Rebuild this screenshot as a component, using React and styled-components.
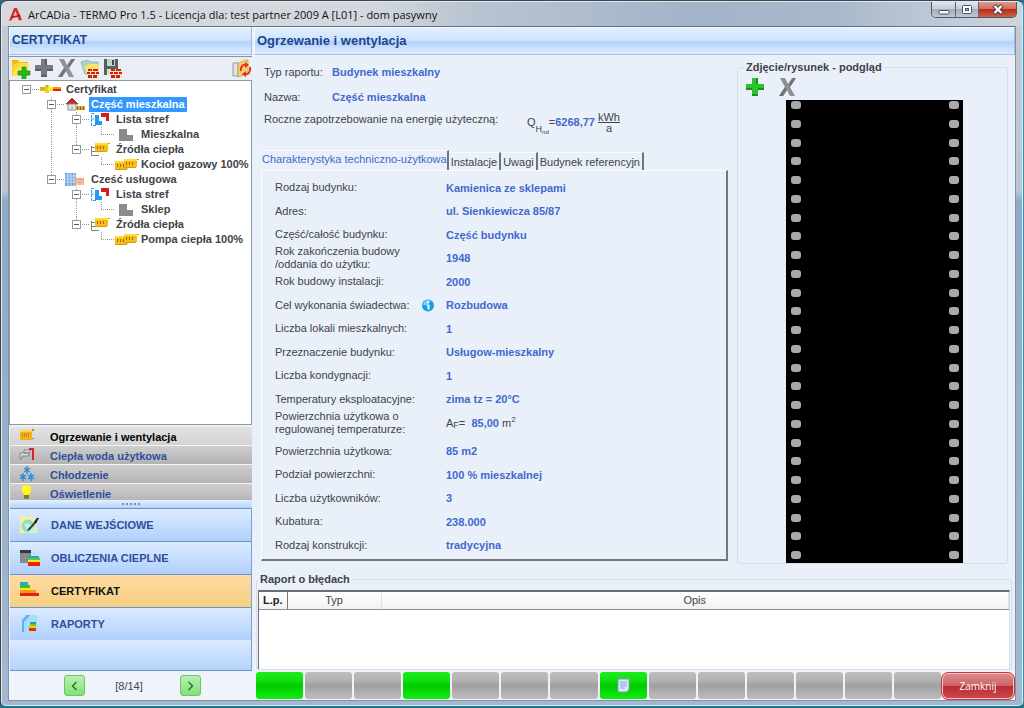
import React, { useState } from "react";
import styled, { createGlobalStyle } from "styled-components";

const GlobalStyle = createGlobalStyle`
    * { box-sizing: border-box; }
    body {
        margin: 0;
        background: #2d6f86;
        font-family: "Liberation Sans", Arial, sans-serif;
        font-size: 11px;
        color: #404347;
    }
    button { font-family: inherit; font-size: inherit; color: inherit; padding: 0; border: 0; background: none; }
`;

const Window = styled.div`
    height: 100vh;
    min-height: 640px;
    display: flex;
    flex-direction: column;
    padding: 0 7px 5px;
    border: 1px solid #3c4450;
    border-right-color: #1b9bb5;
    border-bottom: 2px solid #13788f;
    border-radius: 7px 7px 6px 6px;
    background: linear-gradient(180deg, #c3cbd4 0, #bcc6d2 190px, #8ea9c8 200px, #a3b8d0 100%);
    box-shadow: inset 0 0 0 1px #e3e9ef;
`;

const TitleBar = styled.header`
    height: 24px;
    flex: none;
    display: flex;
    align-items: center;
    margin: 1px -6px 0;
    padding-left: 6px;
    border-radius: 6px 6px 0 0;
    background: linear-gradient(90deg, #d5d9de 0%, #d3d8de 36%, #b9c4d1 46%, #a2b4ca 68%, #a9b9cb 82%, #cdd6df 100%);
`;

const Title = styled.h1`
    flex: 1;
    margin: 0 0 0 5px;
    font: 11px "Open Sans", "Noto Sans", sans-serif;
    color: #111;
`;

const WindowButtons = styled.div`
    display: flex;
    align-self: flex-start;
    height: 16px;
    margin-right: 5px;
    border: 1px solid #4f5b69;
    border-top: 0;
    border-radius: 0 0 5px 5px;
    overflow: hidden;
`;

const WindowButton = styled.button`
    width: ${(p) => (p.$close ? 38 : 23)}px;
    display: flex;
    align-items: center;
    justify-content: center;
    border-left: ${(p) => (p.$first ? 0 : "1px solid #5a6674")};
    background: ${(p) => p.$close
        ? "linear-gradient(#dc9a8c 0, #cf6e5c 45%, #b72c16 50%, #cf6048 100%)"
        : "linear-gradient(#dfe5ec 0, #c5ced9 45%, #a2afbf 50%, #bcc8d5 100%)"};
`;

const Client = styled.div`
    flex: 1;
    min-height: 0;
    display: flex;
    flex-direction: column;
    background: #eaf0f9;
    border: 1px solid #8792a1;
    border-top-color: #68727f;
`;

const Columns = styled.div`
    flex: 1;
    min-height: 0;
    display: flex;
`;

const Sidebar = styled.aside`
    width: 243px;
    flex: none;
    display: flex;
    flex-direction: column;
`;

const SectionHeader = styled.h2`
    height: 28px;
    flex: none;
    display: flex;
    align-items: center;
    margin: 0 0 1px;
    padding: 0 0 2px 2px;
    border: 1px solid #a6bcdc;
    border-top-color: #eef5ff;
    border-left-color: #f6faff;
    background: linear-gradient(#e2efff 0, #cfe3fe 45%, #b2d2fb 55%, #cfe4ff 82%, #dcebff 100%);
    font-size: ${(p) => (p.$large ? 13 : 12)}px;
    font-weight: bold;
    color: #1d4590;
`;

const Toolbar = styled.div`
    height: 24px;
    flex: none;
    display: flex;
    align-items: center;
    gap: 2px;
    padding: 0 0 0 1px;
    border-top: 1px solid #8d949d;
    background: #e9eef6;
`;

const ToolButton = styled.button`
    width: 21px;
    height: 21px;
    margin-left: ${(p) => (p.$end ? "auto" : 0)};
    svg { display: block; }
`;

const TreePanel = styled.div`
    flex: 1;
    min-height: 0;
    overflow: hidden;
    padding: 1px 0 0 1px;
    border: 1px solid #8f979f;
    background: #fff;
`;

const TreeRow = styled.div`
    height: 15px;
    display: flex;
    align-items: center;
    svg { flex: none; display: block; }
`;

const TreeLabel = styled.span`
    padding: 0 2px;
    line-height: 15px;
    font-weight: bold;
    color: ${(p) => (p.$selected ? "#fff" : "#404347")};
    background: ${(p) => (p.$selected ? "#3399ff" : "none")};
`;

const SubNav = styled.nav`
    height: 75px;
    flex: none;
    overflow: hidden;
    padding: 2px 0 0 1px;
`;

const SubNavItem = styled.button`
    width: 100%;
    height: 19px;
    display: flex;
    align-items: center;
    gap: 13px;
    padding: 2px 0 0 9px;
    border-bottom: 1px solid #f4f4f4;
    background: ${(p) => (p.$active ? "linear-gradient(#e2e2e2, #d3d3d3)" : "linear-gradient(#cfcfcf, #b3b3b3)")};
    font-weight: bold;
    color: ${(p) => (p.$active ? "#000" : "#2f4f9a")};
    svg { margin-top: -4px; }
`;

const Splitter = styled.div`
    height: 8px;
    flex: none;
    display: flex;
    align-items: center;
    justify-content: center;
    gap: 2px;
    margin-left: 1px;
    background: linear-gradient(#e3efff, #b6d3fb);
`;

const Dot = styled.span`
    width: 2px;
    height: 2px;
    background: #6f90c4;
`;

const MainNav = styled.nav`
    height: 163px;
    flex: none;
    display: flex;
    flex-direction: column;
    margin-left: 1px;
    border-right: 1px solid #7ba0d4;
    background: linear-gradient(#dcebff 132px, #b3d2fc);
    border-bottom: 1px solid #6f93c7;
`;

const MainNavItem = styled.button`
    height: 33px;
    display: flex;
    align-items: center;
    gap: 10px;
    padding-left: 9px;
    border-top: 1px solid #6a92cc;
    background: ${(p) => (p.$active ? "linear-gradient(#ffdba4, #f5cf80)" : "linear-gradient(#ddebff, #b0d0fd)")};
    font-weight: bold;
    color: ${(p) => (p.$active ? "#111" : "#2f4f9a")};
`;

const Content = styled.main`
    flex: 1;
    min-width: 0;
    display: flex;
    flex-direction: column;
    padding-left: 2px;
`;

const Work = styled.div`
    flex: 1;
    min-height: 0;
    display: flex;
    gap: 9px;
    padding: 3px 7px 0 7px;
`;

const Summary = styled.section`
    flex: 1;
    min-width: 0;
    display: flex;
    flex-direction: column;
`;

const SummaryRow = styled.div`
    height: ${(p) => p.$height}px;
    flex: none;
    display: flex;
    align-items: center;
    padding-left: 3px;
`;

const SummaryLabel = styled.span`
    width: ${(p) => (p.$wide ? 263 : 68)}px;
`;

const Value = styled.strong`
    color: #4169cf;
`;

const Formula = styled.span`
    display: flex;
    align-items: center;
    line-height: 12px;
    padding-top: 6px;
`;

const Sub = styled.span`
    align-self: flex-end;
    font-size: ${(p) => (p.$tiny ? 6 : 9)}px;
    line-height: ${(p) => (p.$tiny ? 2 : 8)}px;
`;

const Fraction = styled.span`
    display: flex;
    flex-direction: column;
    align-items: center;
    margin-left: 3px;
    line-height: 10px;
    span:first-child { border-bottom: 1px solid #404347; }
`;

const TabList = styled.div`
    height: 20px;
    flex: none;
    display: flex;
    align-items: flex-end;
    margin-top: 21px;
`;

const Tab = styled.button`
    height: ${(p) => (p.$active ? 20 : 18)}px;
    padding: ${(p) => (p.$active ? "0 0 3px 1px" : "0 2px")};
    border-top: 1px solid #f8fbff;
    border-right: 2px solid #71767c;
    color: ${(p) => (p.$active ? "#4169cf" : "#404347")};
    white-space: nowrap;
`;

const TabPanel = styled.dl`
    flex: 1;
    min-height: 0;
    display: flex;
    flex-direction: column;
    margin: 0 0 3px;
    padding: 5px 0 2px 13px;
    border: 1px solid #fbfdff;
    border-right: 2px solid #74787d;
    border-bottom: 2px solid #74787d;
`;

const Field = styled.div`
    flex: 1;
    min-height: 0;
    display: flex;
    align-items: center;
    margin-top: ${(p) => (p.$spaced ? 5 : 0)}px;
    dt { width: 147px; line-height: 13px; white-space: pre-line; }
    dd { margin: 0; display: flex; align-items: center; }
`;

const InfoSlot = styled.span`
    width: 24px;
    height: 13px;
`;

const Power = styled.sup`
    align-self: flex-start;
    font-size: 8px;
    line-height: 8px;
`;

const Group = styled.fieldset`
    min-width: 0;
    display: flex;
    flex-direction: column;
    margin: 0;
    border: 1px solid #d5dfe9;
    border-radius: 3px;
`;

const Preview = styled(Group)`
    width: 271px;
    flex: none;
    margin-top: 2px;
    padding: 3px 3px 0 6px;
`;

const Legend = styled.legend`
    padding: 0 2px;
    line-height: 13px;
    font-weight: bold;
`;

const PreviewTools = styled.div`
    display: flex;
    gap: 12px;
    padding-bottom: 2px;
    svg { display: block; }
`;

const Film = styled.div`
    flex: 1;
    min-height: 0;
    width: 177px;
    align-self: center;
    display: flex;
    justify-content: space-between;
    padding: 0 4px 0 5px;
    background: #000;
`;

const Perforation = styled.div`
    display: flex;
    flex-direction: column;
    justify-content: space-between;
    padding: 1px 0 4px;
`;

const Hole = styled.span`
    width: 10px;
    height: 8px;
    border-radius: 3px;
    background: #a9a9a9;
`;

const Report = styled(Group)`
    flex: none;
    margin: 9px 3px 1px 2px;
    padding: 4px 1px 0;
`;

const ReportFrame = styled.div`
    min-height: 79px;
    background: #fff;
    border-top: 2px solid #6a6e73;
    border-left: 1px solid #6a6e73;
    border-right: 1px solid #d5dde6;
`;

const ReportTable = styled.table`
    width: 100%;
    border-collapse: collapse;
    table-layout: fixed;
    th {
        height: 17px;
        padding: 0;
        font-weight: normal;
        line-height: 16px;
        background: linear-gradient(#fff, #f0f2f3);
        border-right: 1px solid #dde1e5;
        border-bottom: 1px solid #8c9196;
    }
    th:first-child { width: 28px; font-weight: bold; color: #222; border-right-color: #777; }
    th:nth-child(2) { width: 94px; }
`;

const StatusBar = styled.footer`
    height: 29px;
    flex: none;
    display: flex;
    align-items: center;
    background: #eff4fb;
`;

const Pager = styled.div`
    width: 247px;
    flex: none;
    display: flex;
    align-items: center;
    justify-content: space-between;
    padding: 0 55px;
    span { padding-right: 7px; }
`;

const PagerButton = styled.button`
    width: 21px;
    height: 21px;
    display: flex;
    align-items: center;
    justify-content: center;
    border: 1px solid #6fc46b;
    border-radius: 3px;
    background: linear-gradient(#b9f0b2, #7fe276);
`;

const Steps = styled.div`
    flex: 1;
    display: flex;
    gap: 2px;
    height: 27px;
`;

const Step = styled.button`
    flex: 1;
    display: flex;
    align-items: center;
    justify-content: center;
    border-radius: 3px;
    background: ${(p) => (p.$done
        ? "linear-gradient(#1bec1b 0, #12e012 30%, #00cb00 50%, #0adf0a 80%, #10ee10 100%)"
        : "linear-gradient(#bdbdbd 0, #b3b3b3 30%, #9f9f9f 50%, #b3b3b3 80%, #bcbcbc 100%)")};
`;

const CloseButton = styled.button`
    width: 74px;
    height: 28px;
    border: 1px solid #c8383e;
    border-radius: 7px;
    box-shadow: inset 0 0 0 1px #f2c6c6;
    background: linear-gradient(#dc8d8d 0, #cd6467 48%, #b92c34 52%, #cc4a4f 100%);
    font-family: "Open Sans", "Noto Sans", sans-serif;
    font-size: 10px;
    color: #fff;
`;

const Svg = ({ w, h, children }) => (
    <svg width={w} height={h} viewBox={`0 0 ${w} ${h}`} aria-hidden="true">{children}</svg>
);

const LogoIcon = () => (
    <Svg w={15} h={15}>
        <path d="M1 14 6 1h3l5 12-3 .5L7.500 4 4 13z" fill="#e02a2a" />
        <path d="m2 10 10-2.500.6 2L4 11z" fill="#c91515" />
    </Svg>
);

const Bricks = () => (
    <g>
        <path d="M8 11h12v9H8z" fill="#f6e3c0" />
        <path d="M9 11h4v2H9zm5 0h5v2h-5zm-6 3h3v2H8zm4 0h4v2h-4zm5 0h3v2h-3zm-8 3h4v3H9zm5 0h4v3h-4z" fill="#d3200b" />
    </g>
);

const AddFolderIcon = () => (
    <Svg w={21} h={21}>
        <path d="M2 2h6l2 2h8v14H2z" fill="#f3b90c" />
        <path d="m5 8 4-3h10l-3 13H2z" fill="#ffe34d" />
        <path d="M2 8 9 3l2 2-9 9z" fill="#ffd22a" />
        <path d="M12 9h4v4h4v4h-4v4h-4v-4H8v-4h4z" fill="#26b81b" stroke="#128a0d" strokeWidth=".6" />
    </Svg>
);

const PlusIcon = ({ color = "#777b7d", dark = "#5c6062" }) => (
    <Svg w={21} h={21}>
        <path d="M8 1h6v6h6v6h-6v6H8v-6H2V7h6z" fill={color} />
        <path d="M12 1h2v6h-2zM2 11h6v2H2zM14 11h6v2h-6zM8 17h6v2H8z" fill={dark} />
    </Svg>
);

const CrossIcon = () => (
    <Svg w={21} h={21}>
        <path d="M3 1h5l3 6 4-6h4l-6 9 5 9h-5l-3-6-4 6H2l6-9z" fill="#8e9193" />
        <path d="m16 1h3l-6 9-1-3zM8 10l2 3-4 6H2z" fill="#717476" />
    </Svg>
);

const FolderBricksIcon = () => (
    <Svg w={21} h={21}>
        <path d="M2 4 9 2l2 2h8v12H6z" fill="#a6d8c8" stroke="#84a79b" strokeWidth=".7" />
        <path d="m5 9 6-3h9l-2 10H8z" fill="#fbe367" />
        <Bricks />
    </Svg>
);

const DiskBricksIcon = () => (
    <Svg w={21} h={21}>
        <path d="M2 1h14v16H2z" fill="#54615d" />
        <path d="M5 1h8v7H5z" fill="#bcd8c2" />
        <path d="M10 2h2v5h-2z" fill="#3f4c49" />
        <path d="M5 11h8v6H5z" fill="#d9e2dc" />
        <Bricks />
    </Svg>
);

const RefreshIcon = () => (
    <Svg w={21} h={21}>
        <path d="M2 5h5v13H2z" fill="#e3e3df" stroke="#9a9a93" />
        <path d="m7 5 8-3h2v14l-10 3z" fill="#f4cf72" stroke="#b99644" strokeWidth=".6" />
        <path d="M10 13c-1-4 2-7 5-6M19 9c1 5-2 8-5 7" fill="none" stroke="#e5330f" strokeWidth="2" />
        <path d="m14 4 4 3-4 3zM15 13v6l-4-3z" fill="#e5330f" />
    </Svg>
);

const CertificateIcon = () => (
    <Svg w={24} h={15}>
        <path d="M0 5h7v4H0z" fill="#f4ac12" />
        <path d="M5 3h4v8H5z" fill="#e8d320" />
        <path d="M8 5h6v4H8z" fill="#ffea1f" />
        <path d="M13 5h8v2h-8z" fill="#ff9114" />
        <path d="M13 7h8v2h-8z" fill="#de1e0d" />
        <path d="M1 5h3v2H1zM6 3h2v2H6z" fill="#8fc932" />
    </Svg>
);

const HouseIcon = () => (
    <Svg w={24} h={15}>
        <path d="m1 7 6-6 6 6z" fill="#cf2525" stroke="#8d2a22" strokeWidth=".7" />
        <path d="M3 7h8v6H3z" fill="#e6e9e3" stroke="#8a8e88" />
        <path d="M6 9h2v3H6z" fill="#b9c2c3" />
        <path d="M11 9h9v4h-9z" fill="#e0a438" />
        <path d="M12 10h1v3h-1zm3 0h1v3h-1zm3 0h1v3h-1z" fill="#8c5b14" />
    </Svg>
);

const ZonesIcon = () => (
    <Svg w={24} h={15}>
        <path d="M4 1.500H1.500v12H6M1.500 7H4" fill="none" stroke="#2799f0" strokeDasharray="3 1" />
        <path d="M5 3h4v6h3v4H5z" fill="#2799f0" />
        <path d="M11 1h8v8h-3V5h-5z" fill="#da1a24" />
    </Svg>
);

const ZoneIcon = () => (
    <Svg w={24} h={15}>
        <path d="M4 2h8v6h6v6H4z" fill="#898b8d" />
    </Svg>
);

const Radiator = ({ x = 0, y = 0 }) => (
    <g transform={`translate(${x} ${y})`}>
        <path d="M0 1h13v8H0z" fill="#f6bd16" />
        <path d="M0 1h13v2H0z" fill="#ffdc35" />
        <path d="M2 4h1v3H2zm3 0h1v3H5zm3 0h1v3H8z" fill="#a76d08" />
        <path d="M13 1h2v1h-2zM0 9h12v1H0z" fill="#d49a1c" />
    </g>
);

const SourcesIcon = () => (
    <Svg w={24} h={15}>
        <path d="M1.500 4v9.500H9M1.500 9.500H7M1.500 5.500H6" fill="none" stroke="#7e8184" />
        <Radiator x={5} />
    </Svg>
);

const SourceIcon = () => (
    <Svg w={24} h={15}>
        <Radiator y={3} />
        <Radiator x={9} y={1} />
    </Svg>
);

const BuildingIcon = () => (
    <Svg w={24} h={15}>
        <path d="M0 1h11v13H0z" fill="#71a9df" />
        <path d="M0 4h11M0 7h11M0 10h11M3 1v13M6 1v13M9 1v13" stroke="#d9e9f8" strokeWidth=".8" />
        <path d="M10 6h9v7h-9z" fill="#ef9f6c" />
        <path d="M10 9h9M10 12h9M13 6v7M17 6v7" stroke="#fae0d0" strokeWidth=".7" />
    </Svg>
);

const HeatingIcon = () => (
    <Svg w={18} h={15}>
        <path d="M1 2h12v10H1z" fill="#f4b31c" />
        <path d="M1 2h12v2H1z" fill="#ffd447" />
        <path d="M3 5h1v4H3zm2 0h1v4H5zm2 0h1v4H7zm2 0h1v4H9z" fill="#c18a1c" />
        <path d="M13 1h2v2h-2zm0 9h2v1h-2z" fill="#bd8520" />
    </Svg>
);

const TapIcon = () => (
    <Svg w={18} h={15}>
        <path d="M1 6h9v3H3v3H1zM5 3h6v3H5z" fill="#dadada" stroke="#777" strokeWidth=".8" />
        <path d="M10 2h4v11" fill="none" stroke="#d52222" strokeWidth="2" />
    </Svg>
);

const SnowIcon = () => (
    <Svg w={18} h={15}>
        {[[8, 4], [4, 11], [12, 11]].map(([x, y]) => (
            <path
                key={x}
                d={`M${x} ${y - 4}v8M${x - 3} ${y - 2}l6 4M${x - 3} ${y + 2}l6-4`}
                stroke="#1e86dc"
                strokeWidth="1.300"
            />
        ))}
    </Svg>
);

const BulbIcon = () => (
    <Svg w={18} h={15}>
        <path d="M7 0C3 0 2 3 3 6l2 4h5l2-4c1-3-1-6-5-6z" fill="#fff51f" />
        <path d="M5 2c2-1 2 0 1 3z" fill="#fffcc0" />
        <path d="M5 10h5v3l-1 1H6l-1-1z" fill="#8a7b22" />
    </Svg>
);

const InputDataIcon = () => (
    <Svg w={22} h={20}>
        <path d="M1 2h14l4 16H1z" fill="#f8ee95" />
        <circle cx="9" cy="11" r="6.500" fill="#93dccb" />
        <path d="M5 9c5-2 10 2 13 8l-8 1z" fill="#c9f0de" />
        <path d="m8 15 8-9 2 1-8 9z" fill="#2c4b42" />
        <path d="m15 7 3-4 2 0-3 5z" fill="#111" />
    </Svg>
);

const CalcIcon = () => (
    <Svg w={22} h={20}>
        <path d="M1 2h11v13H1z" fill="#85888b" />
        <path d="M1 2h11v3H1z" fill="#35383b" />
        <path d="M3 7h1v1H3zm3 0h1v1H6zm-3 3h1v1H3zm3 0h1v1H6zm-3 3h1v1H3zm3 0h1v1H6z" fill="#a9abad" />
        <path d="M9 8h11v3H9z" fill="#19a8d6" />
        <path d="M9 10h12v2H9z" fill="#57cc31" />
        <path d="M9 12h12v2H9z" fill="#ffec1c" />
        <path d="M9 14h12v4H9z" fill="#e8260c" />
    </Svg>
);

const EnergyIcon = () => (
    <Svg w={22} h={20}>
        <path d="M1 1h8v3H1z" fill="#2aa7cf" />
        <path d="M1 4h10v3H1z" fill="#39bd36" />
        <path d="M1 7h11v2H1z" fill="#f6e91a" />
        <path d="M1 9h16v3H1z" fill="#f69a18" />
        <path d="M1 12h19v3H1z" fill="#df230e" />
    </Svg>
);

const ReportsIcon = () => (
    <Svg w={22} h={20}>
        <path d="M7 1h11v17H3V5z" fill="#a7ddfb" />
        <path d="M3 6 8 1h3L5 8v10H3z" fill="#5eb2ee" />
        <path d="M11 8h6v2h-6z" fill="#1ba5a0" />
        <path d="M11 10h6v2h-6z" fill="#78ca2f" />
        <path d="M10 12h7v2h-7z" fill="#fbc61a" />
        <path d="M10 14h7v3h-7z" fill="#e43312" />
    </Svg>
);

const InfoIcon = () => (
    <Svg w={13} h={13}>
        <circle cx="6" cy="6.500" r="6" fill="#159fe4" />
        <path d="M1 6a5 5 0 0 1 8-4L4 6z" fill="#74d0f7" />
        <path d="M5 2.500h2v2H5zM4.500 5.500h3v5h-2v-4h-1z" fill="#fff" />
    </Svg>
);

const PageIcon = () => (
    <Svg w={13} h={15}>
        <path d="M1 1h11v10l-2 3H1z" fill="#dcebf8" stroke="#7f9bc5" />
        <path d="M3 4h7M3 6h7M3 8h7M3 10h5" stroke="#8aa6d2" />
    </Svg>
);

// pass: columns whose guide line runs straight through the row
const tree = [
    { label: "Certyfikat", depth: 0, icon: CertificateIcon, root: true, last: true, pass: [] },
    { label: "Część mieszkalna", depth: 1, icon: HouseIcon, pass: [] },
    { label: "Lista stref", depth: 2, icon: ZonesIcon, pass: [1] },
    { label: "Mieszkalna", depth: 3, icon: ZoneIcon, leaf: true, last: true, pass: [1, 2] },
    { label: "Źródła ciepła", depth: 2, icon: SourcesIcon, last: true, pass: [1] },
    { label: "Kocioł gazowy 100%", depth: 3, icon: SourceIcon, leaf: true, last: true, pass: [1] },
    { label: "Cześć usługowa", depth: 1, icon: BuildingIcon, last: true, pass: [] },
    { label: "Lista stref", depth: 2, icon: ZonesIcon, pass: [] },
    { label: "Sklep", depth: 3, icon: ZoneIcon, leaf: true, last: true, pass: [2] },
    { label: "Źródła ciepła", depth: 2, icon: SourcesIcon, last: true, pass: [] },
    { label: "Pompa ciepła 100%", depth: 3, icon: SourceIcon, leaf: true, last: true, pass: [] },
];

const Guides = ({ node }) => {
    const x = 15 + node.depth * 25;
    const w = 29 + node.depth * 25;
    return (
        <Svg w={w} h={15}>
            <g stroke="#9a9a9a" strokeDasharray="1 1" shapeRendering="crispEdges">
                {node.pass.map((col) => (
                    <line key={col} x1={15.5 + col * 25} x2={15.5 + col * 25} y1="0" y2="15" />
                ))}
                {!node.root && <line x1={x + 0.5} x2={x + 0.5} y1="0" y2={node.last ? 8 : 15} />}
                <line x1={x} x2={w} y1="7.5" y2="7.5" />
            </g>
            {!node.leaf && (
                <g>
                    <rect x={x - 3.5} y="3.5" width="8" height="8" fill="#fff" stroke="#999" />
                    <path d={`M${x - 2} 7.5h5`} stroke="#4d5a88" />
                </g>
            )}
        </Svg>
    );
};

const subNav = [
    ["Ogrzewanie i wentylacja", HeatingIcon],
    ["Ciepła woda użytkowa", TapIcon],
    ["Chłodzenie", SnowIcon],
    ["Oświetlenie", BulbIcon],
];

const mainNav = [
    ["DANE WEJŚCIOWE", InputDataIcon],
    ["OBLICZENIA CIEPLNE", CalcIcon],
    ["CERTYFIKAT", EnergyIcon],
    ["RAPORTY", ReportsIcon],
];

const tabs = ["Charakterystyka techniczno-użytkowa", "Instalacje", "Uwagi", "Budynek referencyjn"];

const fields = [
    { label: "Rodzaj budynku:", value: "Kamienica ze sklepami" },
    { label: "Adres:", value: "ul. Sienkiewicza 85/87" },
    { label: "Część/całość budynku:", value: "Część budynku" },
    { label: "Rok zakończenia budowy\n/oddania do użytku:", value: "1948" },
    { label: "Rok budowy instalacji:", value: "2000" },
    { label: "Cel wykonania świadectwa:", value: "Rozbudowa", info: true },
    { label: "Liczba lokali mieszkalnych:", value: "1" },
    { label: "Przeznaczenie budynku:", value: "Usługow-mieszkalny" },
    { label: "Liczba kondygnacji:", value: "1" },
    { label: "Temperatury eksploatacyjne:", value: "zima tz = 20°C" },
    { label: "Powierzchnia użytkowa o\nregulowanej temperaturze:", value: "85,00", area: true },
    { label: "Powierzchnia użytkowa:", value: "85 m2", spaced: true },
    { label: "Podział powierzchni:", value: "100 % mieszkalnej" },
    { label: "Liczba użytkowników:", value: "3" },
    { label: "Kubatura:", value: "238.000" },
    { label: "Rodzaj konstrukcji:", value: "tradycyjna" },
];

const doneSteps = [0, 3, 7];

const App = () => {
    const [section, setSection] = useState(0);
    const [page, setPage] = useState(2);
    const [tab, setTab] = useState(0);
    const [selected, setSelected] = useState(1);

    return (
        <>
            <GlobalStyle />
            <Window>
                <TitleBar>
                    <LogoIcon />
                    <Title>ArCADia - TERMO Pro 1.5 - Licencja dla: test partner 2009 A [L01] - dom pasywny</Title>
                    <WindowButtons>
                        <WindowButton $first aria-label="Minimalizuj">
                            <Svg w={12} h={10}><rect x="1" y="5.500" width="10" height="3.500" rx="1" fill="#fff" stroke="#4b5563" /></Svg>
                        </WindowButton>
                        <WindowButton aria-label="Maksymalizuj">
                            <Svg w={12} h={11}>
                                <rect x="1.500" y="1.500" width="9" height="8" rx="1" fill="#fff" stroke="#4b5563" />
                                <rect x="4.500" y="4.500" width="3" height="2" fill="#aab6c5" stroke="#4b5563" />
                            </Svg>
                        </WindowButton>
                        <WindowButton $close aria-label="Zamknij okno">
                            <Svg w={12} h={11}>
                                <path d="m2 1.500 8 8m0-8-8 8" stroke="#553a3e" strokeWidth="4" />
                                <path d="m2.500 2 7 7m0-7-7 7" stroke="#fff" strokeWidth="2.300" />
                            </Svg>
                        </WindowButton>
                    </WindowButtons>
                </TitleBar>
                <Client>
                    <Columns>
                        <Sidebar>
                            <SectionHeader>CERTYFIKAT</SectionHeader>
                            <Toolbar>
                                <ToolButton aria-label="Nowy"><AddFolderIcon /></ToolButton>
                                <ToolButton aria-label="Dodaj"><PlusIcon /></ToolButton>
                                <ToolButton aria-label="Usuń"><CrossIcon /></ToolButton>
                                <ToolButton aria-label="Otwórz"><FolderBricksIcon /></ToolButton>
                                <ToolButton aria-label="Zapisz"><DiskBricksIcon /></ToolButton>
                                <ToolButton $end aria-label="Odśwież"><RefreshIcon /></ToolButton>
                            </Toolbar>
                            <TreePanel role="tree">
                                {tree.map((node, i) => (
                                    <TreeRow
                                        key={i}
                                        role="treeitem"
                                        aria-level={node.depth + 1}
                                        aria-selected={selected === i}
                                        onClick={() => setSelected(i)}
                                    >
                                        <Guides node={node} />
                                        <node.icon />
                                        <TreeLabel $selected={selected === i}>{node.label}</TreeLabel>
                                    </TreeRow>
                                ))}
                            </TreePanel>
                            <SubNav>
                                {subNav.map(([label, Icon], i) => (
                                    <SubNavItem key={label} $active={section === i} onClick={() => setSection(i)}>
                                        <Icon />{label}
                                    </SubNavItem>
                                ))}
                            </SubNav>
                            <Splitter><Dot /><Dot /><Dot /><Dot /><Dot /></Splitter>
                            <MainNav>
                                {mainNav.map(([label, Icon], i) => (
                                    <MainNavItem key={label} $active={page === i} onClick={() => setPage(i)}>
                                        <Icon />{label}
                                    </MainNavItem>
                                ))}
                            </MainNav>
                        </Sidebar>
                        <Content>
                            <SectionHeader $large>Ogrzewanie i wentylacja</SectionHeader>
                            <Work>
                                <Summary>
                                    <SummaryRow $height={25}>
                                        <SummaryLabel>Typ raportu:</SummaryLabel>
                                        <Value>Budynek mieszkalny</Value>
                                    </SummaryRow>
                                    <SummaryRow $height={25}>
                                        <SummaryLabel>Nazwa:</SummaryLabel>
                                        <Value>Część mieszkalna</Value>
                                    </SummaryRow>
                                    <SummaryRow $height={20}>
                                        <SummaryLabel $wide>Roczne zapotrzebowanie na energię użyteczną:</SummaryLabel>
                                        <Formula>
                                            Q<Sub>H</Sub><Sub $tiny>nd</Sub>=<Value>6268,77</Value>
                                            <Fraction><span>kWh</span><span>a</span></Fraction>
                                        </Formula>
                                    </SummaryRow>
                                    <TabList role="tablist">
                                        {tabs.map((label, i) => (
                                            <Tab
                                                key={label}
                                                role="tab"
                                                aria-selected={tab === i}
                                                $active={tab === i}
                                                onClick={() => setTab(i)}
                                            >
                                                {label}
                                            </Tab>
                                        ))}
                                    </TabList>
                                    <TabPanel>
                                        {fields.map((field) => (
                                            <Field key={field.label} $spaced={field.spaced}>
                                                <dt>{field.label}</dt>
                                                <dd>
                                                    <InfoSlot>{field.info && <InfoIcon />}</InfoSlot>
                                                    {field.area && <>A<Sub>F</Sub>=&nbsp;&nbsp;</>}
                                                    <Value>{field.value}</Value>
                                                    {field.area && <>&nbsp;m<Power>2</Power></>}
                                                </dd>
                                            </Field>
                                        ))}
                                    </TabPanel>
                                </Summary>
                                <Preview>
                                    <Legend>Zdjęcie/rysunek - podgląd</Legend>
                                    <PreviewTools>
                                        <ToolButton aria-label="Dodaj zdjęcie"><PlusIcon color="#2bc22c" dark="#149316" /></ToolButton>
                                        <ToolButton aria-label="Usuń zdjęcie"><CrossIcon /></ToolButton>
                                    </PreviewTools>
                                    <Film>
                                        {[0, 1].map((side) => (
                                            <Perforation key={side}>
                                                {Array.from({ length: 25 }, (_, i) => <Hole key={i} />)}
                                            </Perforation>
                                        ))}
                                    </Film>
                                </Preview>
                            </Work>
                            <Report>
                                <Legend>Raport o błędach</Legend>
                                <ReportFrame>
                                    <ReportTable>
                                        <thead>
                                            <tr><th>L.p.</th><th>Typ</th><th>Opis</th></tr>
                                        </thead>
                                    </ReportTable>
                                </ReportFrame>
                            </Report>
                        </Content>
                    </Columns>
                    <StatusBar>
                        <Pager>
                            <PagerButton aria-label="Poprzednia">
                                <Svg w={9} h={10}><path d="M6.500 1 2.500 5l4 4" fill="none" stroke="#2b6a2c" strokeWidth="1.400" /></Svg>
                            </PagerButton>
                            <span>[8/14]</span>
                            <PagerButton aria-label="Następna">
                                <Svg w={9} h={10}><path d="m2.500 1 4 4-4 4" fill="none" stroke="#2b6a2c" strokeWidth="1.400" /></Svg>
                            </PagerButton>
                        </Pager>
                        <Steps>
                            {Array.from({ length: 14 }, (_, i) => (
                                <Step key={i} $done={doneSteps.includes(i)} aria-label={`Krok ${i + 1}`}>
                                    {i === 7 && <PageIcon />}
                                </Step>
                            ))}
                        </Steps>
                        <CloseButton>Zamknij</CloseButton>
                    </StatusBar>
                </Client>
            </Window>
        </>
    );
};

export default App;
